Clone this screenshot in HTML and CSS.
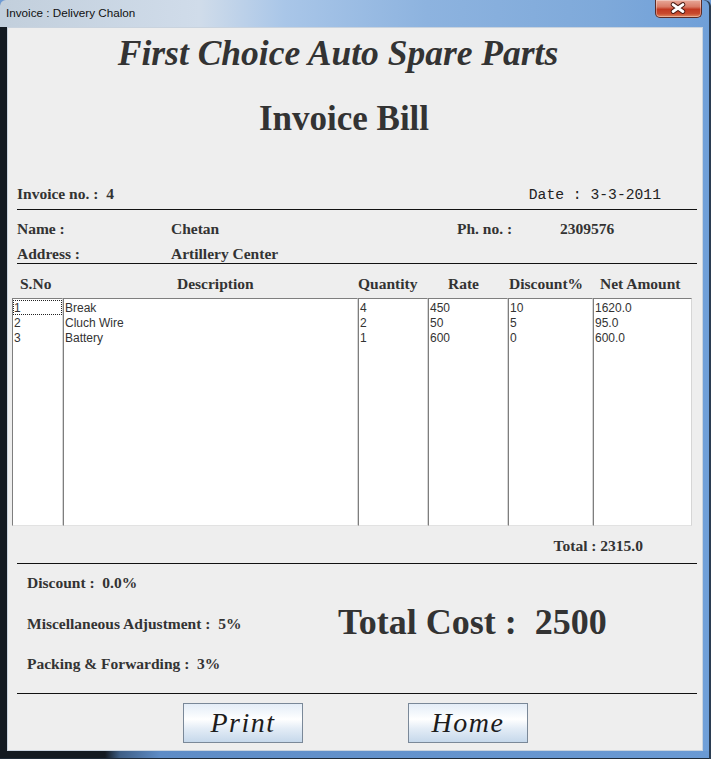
FILE: index.html
```
<!DOCTYPE html>
<html>
<head>
<meta charset="utf-8">
<link rel="stylesheet" href="styles.css">
</head>
<body>
<div class="window">
  <div class="titlebar">
    <span class="title">Invoice : Delivery Chalon</span>
    <div class="close">
      <svg width="47" height="18" viewBox="0 0 47 18">
        <path d="M18.5 4.5 L28.5 11.5 M28.5 4.5 L18.5 11.5" stroke="#4a1a12" stroke-width="5" stroke-linecap="round" fill="none"/>
        <path d="M18.5 4.5 L28.5 11.5 M28.5 4.5 L18.5 11.5" stroke="#ffffff" stroke-width="3" stroke-linecap="round" fill="none"/>
      </svg>
    </div>
  </div>
  <div class="panel">
    <h1 class="shop">First Choice Auto Spare Parts</h1>
    <h2 class="doc">Invoice Bill</h2>
    <div class="inv-row">
      <span class="lbl">Invoice no. :  4</span>
      <span class="date">Date : 3-3-2011</span>
    </div>
    <div class="rule r1"></div>
    <div class="cust-row name">
      <span>Name :</span><span>Chetan</span><span>Ph. no. :</span><span>2309576</span>
    </div>
    <div class="cust-row addr">
      <span>Address :</span><span>Artillery Center</span>
    </div>
    <div class="rule"></div>
    <div class="heads">
      <span class="h-sno">S.No</span>
      <span class="h-desc">Description</span>
      <span class="h-qty">Quantity</span>
      <span class="h-rate">Rate</span>
      <span class="h-disc">Discount%</span>
      <span class="h-net">Net Amount</span>
    </div>
    <div class="table">
      <div class="list"><div class="item focus">1</div><div class="item">2</div><div class="item">3</div></div>
      <div class="list"><div class="item">Break</div><div class="item">Cluch Wire</div><div class="item">Battery</div></div>
      <div class="list"><div class="item">4</div><div class="item">2</div><div class="item">1</div></div>
      <div class="list"><div class="item">450</div><div class="item">50</div><div class="item">600</div></div>
      <div class="list"><div class="item">10</div><div class="item">5</div><div class="item">0</div></div>
      <div class="list"><div class="item">1620.0</div><div class="item">95.0</div><div class="item">600.0</div></div>
    </div>
    <div class="total">Total : 2315.0</div>
    <div class="rule r3"></div>
    <div class="summary">
      <div class="adj">
        <div class="adj-row">Discount :  0.0%</div>
        <div class="adj-row misc">Miscellaneous Adjustment :  5%</div>
        <div class="adj-row pack">Packing &amp; Forwarding :  3%</div>
      </div>
      <div class="grand">Total Cost :  2500</div>
    </div>
    <div class="rule r4"></div>
    <div class="buttons">
      <button class="btn">Print</button>
      <button class="btn">Home</button>
    </div>
  </div>
</div>
</body>
</html>
```

FILE: styles.css
```
* { box-sizing: border-box; }
html, body { margin: 0; padding: 0; }
body { width: 711px; height: 759px; overflow: hidden; background: #6f9bd3; }

.window {
  width: 711px;
  height: 759px;
  display: flex;
  flex-direction: column;
  border-radius: 6px 6px 0 0;
  background:
    linear-gradient(#131a21, #131a21) 0 27px / 7px calc(100% - 27px) no-repeat,
    linear-gradient(to right, #131a21 0, #131a21 105px, #3f5f86 120px, #5e8cc6 160px, #6a9ad4 100%) 0 100% / 100% 8px no-repeat,
    linear-gradient(to right, #c2cfdc 0%, #d0dcea 28%, #a9c6e8 40%, #8db3df 60%, #7ea9da 85%, #6f9fd8 100%);
  box-shadow: inset -2px 0 #2b3d52, inset 0 -1px #1f2b38;
}

.titlebar {
  height: 27px;
  display: flex;
  justify-content: space-between;
  align-items: flex-start;
  padding-left: 6px;
}
.title {
  font-family: "Liberation Sans", Arial, sans-serif;
  font-size: 11.7px;
  line-height: 16px;
  padding-top: 5px;
  color: #101010;
}
.close {
  width: 47px;
  height: 18px;
  margin-right: 9px;
  border: 1px solid #5b2b26;
  border-top: none;
  border-radius: 0 0 5px 5px;
  background: linear-gradient(to bottom, #e8a999 0%, #d97b66 40%, #c23a22 55%, #c84a2e 80%, #e08a62 100%);
  box-shadow: inset 0 0 0 1px rgba(255,255,255,0.35);
  display: flex;
}
.close svg { display: block; margin-left: -1px; }

.panel {
  flex: 1;
  margin: 0 8px 8px 7px;
  border: 1px solid #c9d3de;
  background: #eeeeee;
  display: flex;
  flex-direction: column;
  font-family: "Liberation Serif", "Times New Roman", serif;
  color: #333333;
}

.shop {
  margin: 5px 0 0 0;
  font-size: 35.5px;
  line-height: 40px;
  font-style: italic;
  font-weight: bold;
  text-align: center;
  padding-right: 34px;
}
.doc {
  margin: 26px 0 0 0;
  font-size: 35px;
  line-height: 40px;
  font-weight: bold;
  text-align: center;
  padding-right: 22px;
}

.inv-row {
  margin-top: 45px;
  display: flex;
  justify-content: space-between;
  align-items: baseline;
  padding: 0 41px 0 9px;
  font-size: 15.5px;
  line-height: 20px;
  font-weight: bold;
  white-space: pre;
}
.date {
  font-family: "Liberation Mono", "Courier New", monospace;
  font-weight: normal;
  font-size: 14.7px;
  color: #222222;
}

.rule {
  height: 1px;
  background: #111111;
  margin: 0 5px 0 9px;
}
.r1 { margin-top: 4px; }
.r3 { margin-top: 7px; }
.r4 { margin-top: 19px; }

.cust-row {
  display: grid;
  grid-template-columns: 154px 286px 103px 1fr;
  padding-left: 9px;
  font-size: 15.5px;
  font-weight: bold;
}
.cust-row.name { margin-top: 9px; line-height: 20px; }
.cust-row.addr { margin-top: 6px; line-height: 18px; }

.heads {
  margin-top: 10px;
  margin-left: 4px;
  display: grid;
  grid-template-columns: 51px 295px 70px 80px 85px 99px;
  font-size: 15.5px;
  line-height: 20px;
  font-weight: bold;
  white-space: nowrap;
}
.h-sno { padding-left: 8px; }
.h-desc { padding-left: 114px; }
.h-qty { padding-left: 0; }
.h-rate { padding-left: 20px; }
.h-disc { padding-left: 1px; }
.h-net { padding-left: 7px; }

.table {
  margin: 4px 11px 0 4px;
  height: 228px;
  display: grid;
  grid-template-columns: 51px 295px 70px 80px 85px 99px;
}
.list {
  background: #ffffff;
  border-style: solid;
  border-width: 1px;
  border-color: #7e7e7e #d6d6d6 #e2e2e2 #7e7e7e;
  padding: 1px 0 0 0;
  font-family: "Liberation Sans", Arial, sans-serif;
  font-size: 12px;
  line-height: 15px;
  color: #333333;
}
.item { padding-left: 1px; height: 15px; line-height: 17px; }
.focus { outline: 1px dotted #222222; outline-offset: -1px; }

.total {
  margin-top: 10px;
  text-align: right;
  padding-right: 59px;
  font-size: 15.5px;
  line-height: 20px;
  font-weight: bold;
}

.summary {
  margin-top: 9px;
  padding-left: 19px;
  display: flex;
  align-items: flex-start;
}
.adj {
  flex: 0 0 311px;
  display: flex;
  flex-direction: column;
}
.adj-row {
  font-size: 15.5px;
  line-height: 20px;
  font-weight: bold;
  white-space: pre;
}
.adj-row.misc { margin-top: 21px; }
.adj-row.pack { margin-top: 20px; }
.grand {
  margin-top: 29px;
  font-size: 36px;
  line-height: 40px;
  font-weight: bold;
  white-space: pre;
}

.buttons {
  margin-top: 9px;
  display: flex;
  justify-content: center;
  gap: 105px;
  padding-left: 1px;
}
.btn {
  width: 120px;
  height: 40px;
  border: 1px solid #7a8898;
  border-radius: 0;
  background: linear-gradient(to bottom, #e4edf7 0%, #f4f8fc 25%, #ffffff 40%, #e3ecf6 65%, #c6d8eb 100%);
  font-family: "Liberation Serif", "Times New Roman", serif;
  font-style: italic;
  font-size: 28px;
  letter-spacing: 1.5px;
  color: #1c1c1c;
  padding: 0;
  line-height: 36px;
}
```
